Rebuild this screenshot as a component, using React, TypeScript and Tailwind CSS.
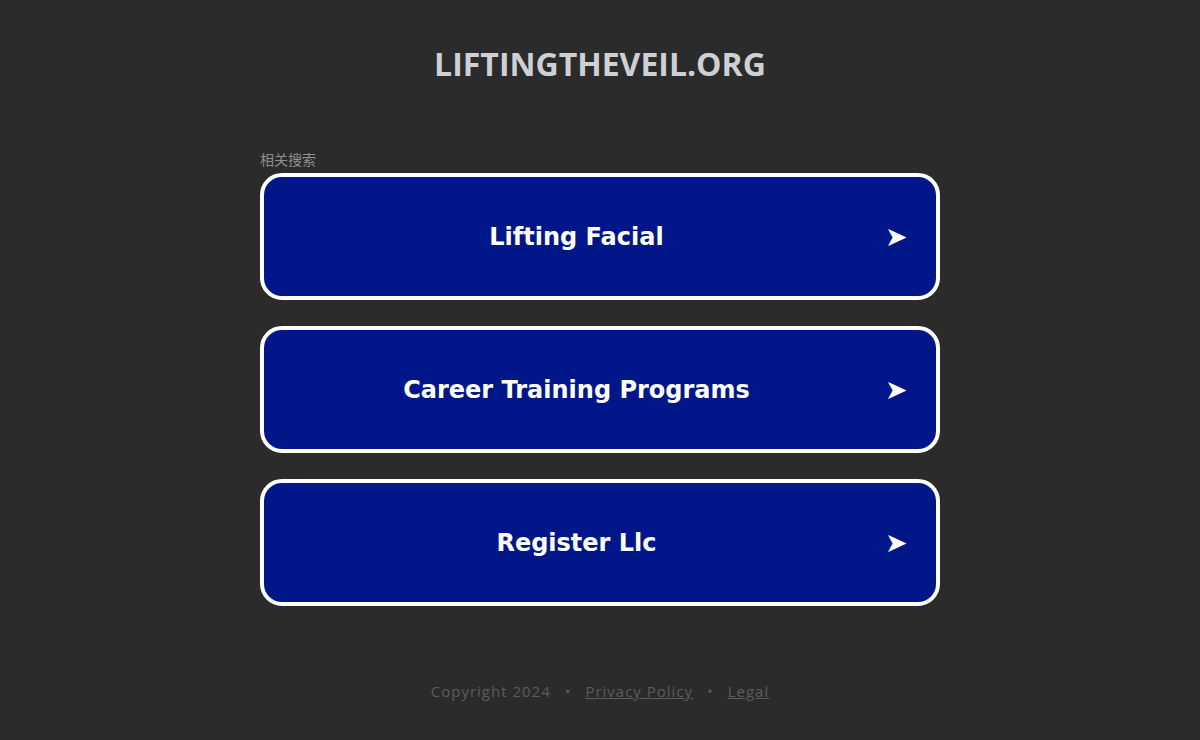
import React from 'react'

const links = ['Lifting Facial', 'Career Training Programs', 'Register Llc']

const App = () => {
  return (
    <div className="flex min-h-screen flex-col items-center bg-[#2b2b2b]">
      <h1 className="mt-[44px] font-['Open_Sans',sans-serif] text-[32px] font-bold leading-[40px] text-[#cdd0d4]">
        LIFTINGTHEVEIL.ORG
      </h1>
      <div className="mt-[66px] w-[680px]">
        <div className="font-['Noto_Sans_CJK_SC',sans-serif] text-[14px] leading-[18px] text-[#8f8f8f]">
          相关搜索
        </div>
        <div className="mt-[5px] flex flex-col gap-[26px]">
          {links.map((label) => (
            <a
              key={label}
              href="#"
              className="flex h-[127px] items-center rounded-[22px] border-4 border-white bg-[#011789] pl-[4px] pr-[28px] text-white"
            >
              <span className="flex-1 text-center font-['DejaVu_Sans',Verdana,sans-serif] text-[24px] font-bold">
                {label}
              </span>
              <span className="mb-[2px] text-[27px] leading-none">➤</span>
            </a>
          ))}
        </div>
      </div>
      <div className="mt-[74px] flex items-center gap-[14px] font-['Open_Sans',sans-serif] text-[15px] tracking-[1px] text-[#5c5c5c]">
        <span>Copyright 2024</span>
        <span>•</span>
        <a href="#" className="underline">Privacy Policy</a>
        <span>•</span>
        <a href="#" className="underline">Legal</a>
      </div>
    </div>
  )
}

export default App
